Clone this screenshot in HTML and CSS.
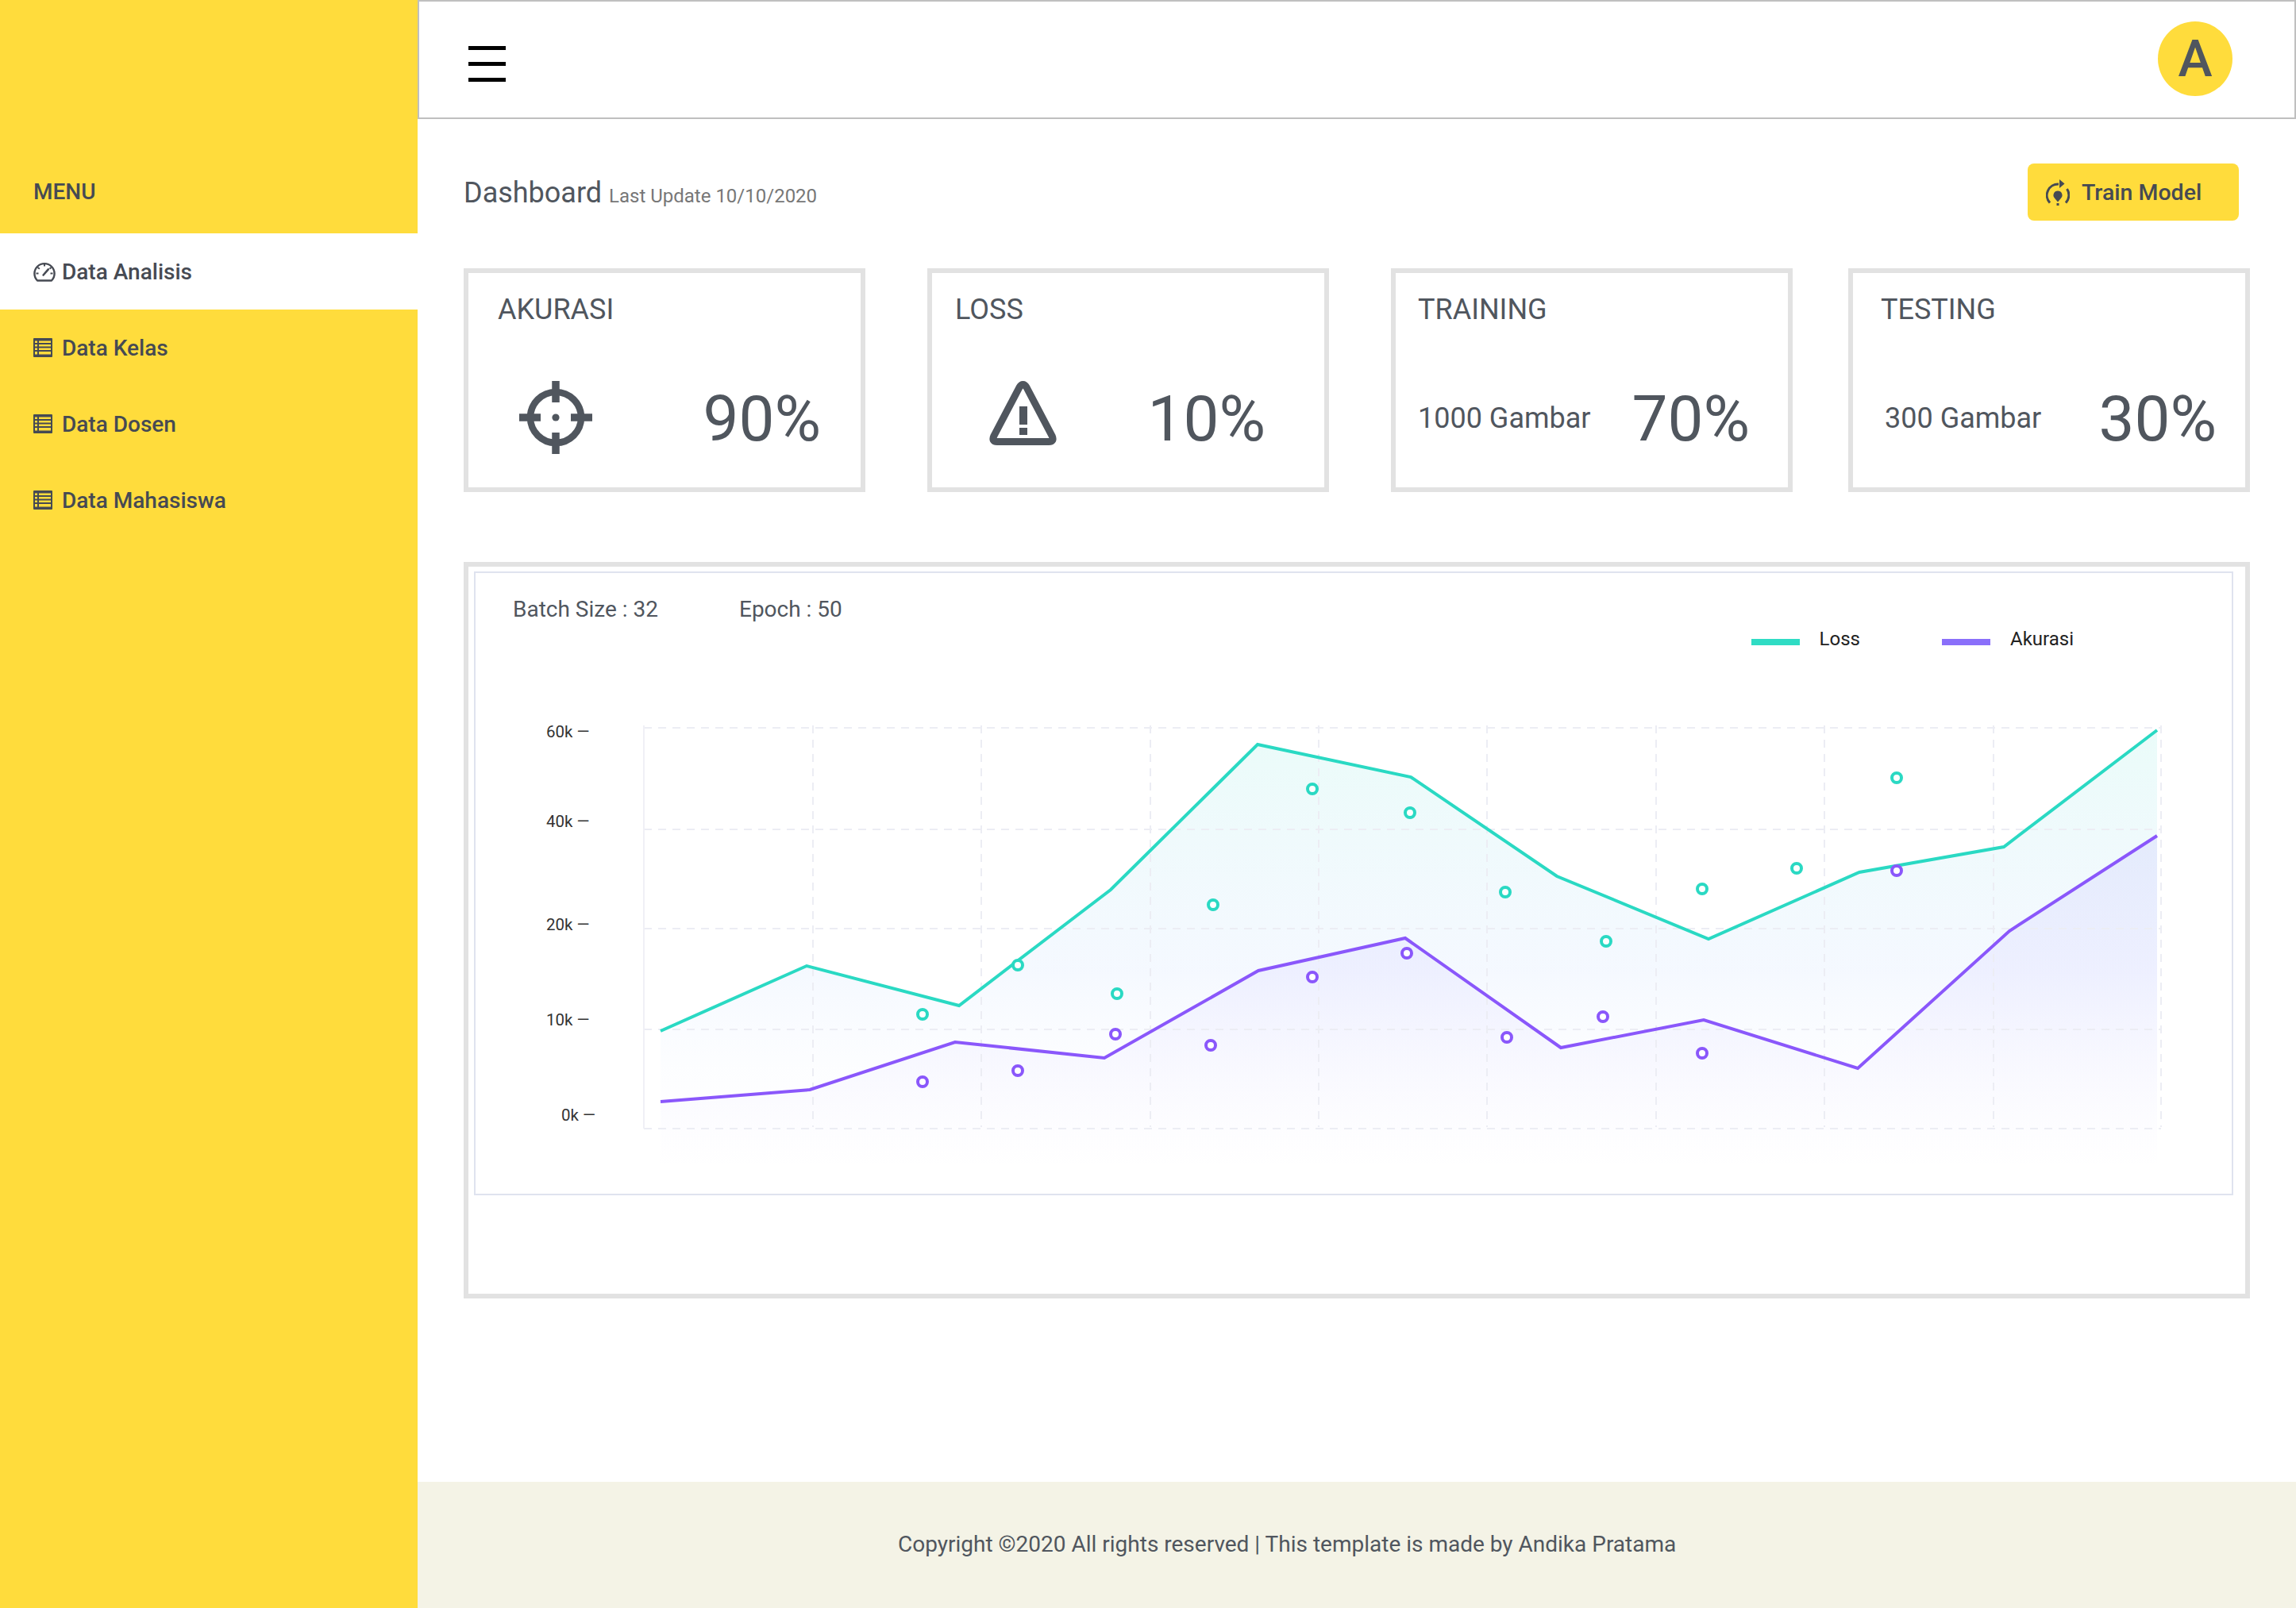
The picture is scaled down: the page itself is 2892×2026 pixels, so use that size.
FILE: index.html
```html
<!DOCTYPE html>
<html lang="id">
<head>
  <meta charset="UTF-8">
  <title>Dashboard</title>
  <link rel="stylesheet" href="styles.css">
</head>
<body>
  <aside class="sidebar">
    <div class="menu-title">MENU</div>
    <a class="menu-item active">
      <svg class="menu-icon" viewBox="0 0 28 26"><path d="M5 24.5 A12.6 12.6 0 1 1 23 24.5 Z" fill="none" stroke="#464a53" stroke-width="2.4" stroke-linejoin="round"/><path d="M14 3.5v3M5.5 8l2.4 1.8M22.5 8l-2 1.6M3.5 15.5h3M21.5 15.5h3" stroke="#464a53" stroke-width="2"/><path d="M12.6 17.5l6.2-7.2" stroke="#464a53" stroke-width="2.6" stroke-linecap="round"/></svg>
      Data Analisis
    </a>
    <a class="menu-item">
      <svg class="menu-icon list" viewBox="0 0 24 24"><use href="#i-list"/></svg>
      Data Kelas
    </a>
    <a class="menu-item">
      <svg class="menu-icon list" viewBox="0 0 24 24"><use href="#i-list"/></svg>
      Data Dosen
    </a>
    <a class="menu-item">
      <svg class="menu-icon list" viewBox="0 0 24 24"><use href="#i-list"/></svg>
      Data Mahasiswa
    </a>
  </aside>

  <svg class="defs">
    <defs>
      <g id="i-list">
        <rect x="0" y="0" width="24" height="24" rx="1" fill="#464a53"/>
        <path d="M2 3.5h3v2.6H2zM7 3.5h15v2.6H7zM2 8h3v2.6H2zM7 8h15v2.6H7zM2 12.5h3v2.6H2zM7 12.5h15v2.6H7zM2 17h3v3.5H2zM7 17h15v3.5H7z" fill="#ffdc3c"/>
      </g>
    </defs>
  </svg>

  <div class="main">
    <header class="topbar">
      <div class="burger"><span></span><span></span><span></span></div>
      <div class="avatar">A</div>
    </header>

    <main class="content">
      <div class="page-head">
        <div class="page-title">Dashboard <small>Last Update 10/10/2020</small></div>
        <button class="btn-train">
          <svg class="btn-icon" viewBox="0 0 30 33"><path d="M5 29.5 A14 14 0 0 1 16 6" fill="none" stroke="#464a53" stroke-width="3"/><path d="M23.5 5.5L17 0v11z" fill="#464a53"/><path d="M26.5 12 A14 14 0 0 1 25 29.5" fill="none" stroke="#464a53" stroke-width="3"/><path d="M15 14.5 a5.5 5.5 0 0 1 4 9.3 L15 28.5 L11 23.8 A5.5 5.5 0 0 1 15 14.5z" fill="#464a53"/><rect x="13.5" y="30" width="3" height="3" fill="#464a53"/></svg>
          Train Model
        </button>
      </div>

      <section class="cards">
        <div class="card card-akurasi">
          <div class="card-title">AKURASI</div>
          <div class="card-row">
            <svg class="card-icon" viewBox="0 0 92 92"><circle cx="46" cy="46" r="32" fill="none" stroke="#50565e" stroke-width="8.5"/><path d="M46 0v27M46 65v27M0 46h27M65 46h27" stroke="#50565e" stroke-width="9.5"/><circle cx="46" cy="46" r="4.6" fill="#50565e"/></svg>
            <div class="card-value">90%</div>
          </div>
        </div>
        <div class="card card-loss">
          <div class="card-title">LOSS</div>
          <div class="card-row">
            <svg class="card-icon warn" viewBox="0 0 85 82"><path d="M42.5 4.5 Q45 4.5 47 8 L79 69 Q82.5 76.5 75 76.5 H10 Q2.5 76.5 6 69 L38 8 Q40 4.5 42.5 4.5 Z" fill="none" stroke="#50565e" stroke-width="9" stroke-linejoin="round"/><path d="M38 32h10v23H38zM38 59h10v9H38z" fill="#50565e"/></svg>
            <div class="card-value">10%</div>
          </div>
        </div>
        <div class="card card-training">
          <div class="card-title">TRAINING</div>
          <div class="card-row">
            <div class="card-note">1000 Gambar</div>
            <div class="card-value">70%</div>
          </div>
        </div>
        <div class="card card-testing">
          <div class="card-title">TESTING</div>
          <div class="card-row">
            <div class="card-note">300 Gambar</div>
            <div class="card-value">30%</div>
          </div>
        </div>
      </section>

      <section class="chart-panel">
        <div class="chart-box">
          <div class="chart-head">
            <div class="chart-params">
              <span>Batch Size : 32</span>
              <span>Epoch : 50</span>
            </div>
            <div class="legend">
              <div class="legend-item"><i class="swatch teal"></i>Loss</div>
              <div class="legend-item"><i class="swatch purple"></i>Akurasi</div>
            </div>
          </div>
          <svg class="chart" viewBox="599 880 2212 624" width="2212" height="624">
            <defs>
              <linearGradient id="fillTeal" gradientUnits="userSpaceOnUse" x1="0" y1="920" x2="0" y2="1475">
                <stop offset="0" stop-color="#2fdcc4" stop-opacity=".1"/>
                <stop offset=".55" stop-color="#7fb0ff" stop-opacity=".08"/>
                <stop offset="1" stop-color="#ffffff" stop-opacity="0"/>
              </linearGradient>
              <linearGradient id="fillPurple" gradientUnits="userSpaceOnUse" x1="0" y1="1053" x2="0" y2="1475">
                <stop offset="0" stop-color="#7b61ff" stop-opacity=".1"/>
                <stop offset="1" stop-color="#7b61ff" stop-opacity="0"/>
              </linearGradient>
            </defs>

            <g class="axis-label">
              <text x="688" y="929">60k —</text>
              <text x="688" y="1042">40k —</text>
              <text x="688" y="1172">20k —</text>
              <text x="688" y="1292">10k —</text>
              <text x="707" y="1412">0k —</text>
            </g>

            <path class="area" fill="url(#fillTeal)" d="M832 1299L1016 1217 1208 1267 1399 1121 1584 938 1777 979 1961 1104 2152 1183 2342 1099 2524 1067 2717 920V1475H832Z"/>
            <path class="area" fill="url(#fillPurple)" d="M832 1388L1020 1373 1203 1313 1391 1333 1585 1223 1770 1182 1966 1320 2146 1285 2340 1346 2531 1173 2717 1053V1475H832Z"/>

            <g class="grid">
              <path d="M811 917H2722M811 1045H2722M811 1170H2722M811 1297H2722M811 1422H2722"/>
              <path d="M1024 914V1420M1236 914V1420M1449 914V1420M1661 914V1420M1873 914V1420M2086 914V1420M2298 914V1420M2511 914V1420M2722 914V1420"/>
            </g>
            <path class="grid-axis" d="M811 914V1422"/>

            <polyline class="line teal-line" points="832,1299 1016,1217 1208,1267 1399,1121 1584,938 1777,979 1961,1104 2152,1183 2342,1099 2524,1067 2717,920"/>
            <polyline class="line purple-line" points="832,1388 1020,1373 1203,1313 1391,1333 1585,1223 1770,1182 1966,1320 2146,1285 2340,1346 2531,1173 2717,1053"/>

            <g class="dots teal-dots">
              <circle cx="1162" cy="1278" r="6"/><circle cx="1282" cy="1216" r="6"/><circle cx="1407" cy="1252" r="6"/>
              <circle cx="1528" cy="1140" r="6"/><circle cx="1653" cy="994" r="6"/><circle cx="1776" cy="1024" r="6"/>
              <circle cx="1896" cy="1124" r="6"/><circle cx="2023" cy="1186" r="6"/><circle cx="2144" cy="1120" r="6"/>
              <circle cx="2263" cy="1094" r="6"/><circle cx="2389" cy="980" r="6"/>
            </g>
            <g class="dots purple-dots">
              <circle cx="1162" cy="1363" r="6"/><circle cx="1282" cy="1349" r="6"/><circle cx="1405" cy="1303" r="6"/>
              <circle cx="1525" cy="1317" r="6"/><circle cx="1653" cy="1231" r="6"/><circle cx="1772" cy="1201" r="6"/>
              <circle cx="1898" cy="1307" r="6"/><circle cx="2019" cy="1281" r="6"/><circle cx="2144" cy="1327" r="6"/>
              <circle cx="2389" cy="1097" r="6"/>
            </g>
          </svg>
        </div>
      </section>
    </main>

    <footer class="footer">Copyright ©2020 All rights reserved | This template is made by Andika Pratama</footer>
  </div>
</body>
</html>
```

FILE: styles.css
```css
* {
  box-sizing: border-box;
}
body {
  margin: 0;
  display: flex;
  min-height: 2026px;
  font-family: Roboto, "Liberation Sans", sans-serif;
  color: #50565e;
  background: #fff;
}
.defs {
  position: absolute;
  width: 0;
  height: 0;
}

/* sidebar */
.sidebar {
  width: 526px;
  flex: none;
  background: #ffdc3c;
  padding-top: 222px;
  color: #464a53;
}
.menu-title {
  font-size: 28px;
  font-weight: 500;
  line-height: 40px;
  padding-left: 42px;
  margin-bottom: 32px;
}
.menu-item {
  display: flex;
  align-items: center;
  height: 96px;
  padding-left: 42px;
  font-size: 28px;
  font-weight: 500;
}
.menu-item.active {
  background: #fff;
}
.menu-icon {
  width: 28px;
  height: 26px;
  margin-right: 8px;
  flex: none;
}
.menu-icon.list {
  width: 24px;
  height: 24px;
  margin-right: 12px;
}

/* top bar */
.main {
  flex: 1;
  display: flex;
  flex-direction: column;
}
.topbar {
  height: 150px;
  border: 2px solid #bfbfbf;
  display: flex;
  align-items: center;
  justify-content: space-between;
  padding: 0 78px 0 62px;
}
.burger {
  width: 47px;
  display: flex;
  flex-direction: column;
  gap: 15px;
  margin-top: 11px;
}
.burger span {
  height: 5px;
  background: #000;
}
.avatar {
  width: 94px;
  height: 94px;
  border-radius: 50%;
  background: #ffdc3c;
  font-size: 65px;
  font-weight: 500;
  line-height: 94px;
  text-align: center;
  margin-bottom: 2px;
}

/* content */
.content {
  flex: 1;
  padding: 56px 58px 0;
}
.page-head {
  display: flex;
  align-items: center;
  justify-content: space-between;
  padding-right: 14px;
}
.page-title {
  font-size: 36px;
  margin-top: 2px;
}
.page-title small {
  font-size: 24px;
  color: #777;
}
.btn-train {
  display: flex;
  align-items: center;
  width: 266px;
  height: 72px;
  padding: 0 0 0 23px;
  border: 0;
  border-radius: 8px;
  background: #ffdc3c;
  color: #464a53;
  font-family: inherit;
  font-size: 28.5px;
  font-weight: 500;
}
.btn-icon {
  width: 30px;
  height: 33px;
  margin-right: 15px;
}

/* stat cards */
.cards {
  display: flex;
  margin-top: 60px;
}
.card {
  width: 506px;
  height: 282px;
  border: 6px solid #e2e2e2;
  margin-right: 78px;
  padding: 25px 0 0 37px;
}
.card-testing {
  margin: 0 0 0 -8px;
}
.card-title {
  font-size: 36px;
  line-height: 43px;
}
.card-row {
  display: flex;
  align-items: center;
  justify-content: space-between;
  height: 92px;
  margin-top: 68px;
}
.card-icon {
  width: 92px;
  height: 92px;
  margin-left: 27px;
}
.card-icon.warn {
  width: 85px;
  height: 82px;
  margin-left: 43px;
  margin-top: -10px;
}
.card-value {
  font-size: 80px;
  line-height: 92px;
  padding-top: 4px;
}
.card-akurasi .card-row {
  padding-right: 50px;
}
.card-loss {
  padding-left: 29px;
}
.card-loss .card-row {
  padding-right: 74px;
}
.card-training {
  padding-left: 28px;
}
.card-training .card-row {
  padding-right: 48px;
}
.card-testing {
  padding-left: 35px;
}
.card-testing .card-row {
  padding: 0 36px 0 5px;
}
.card-note {
  font-size: 36px;
  padding-top: 2px;
}

/* chart */
.chart-panel {
  height: 928px;
  margin-top: 88px;
  border: 6px solid #e2e2e2;
  padding: 6px 15px 0 7px;
}
.chart-box {
  height: 786px;
  border: 2px solid #dfe3ef;
}
.chart-head {
  display: flex;
  justify-content: space-between;
  height: 158px;
  padding: 28px 199px 0 47px;
}
.chart-params {
  display: flex;
  gap: 102px;
  font-size: 28px;
  line-height: 36px;
}
.legend {
  display: flex;
  gap: 103px;
  margin-top: 40px;
  font-size: 24px;
  line-height: 30px;
  color: #222;
}
.legend-item {
  display: flex;
  align-items: center;
  height: 30px;
}
.swatch {
  width: 61px;
  height: 8px;
  margin: 8px 25px 0 0;
}
.swatch.teal {
  background: #2fdcc4;
}
.swatch.purple {
  background: #8a6ffa;
}
.chart {
  display: block;
}
.axis-label text {
  font-size: 20.5px;
  fill: #333;
}
.grid path {
  fill: none;
  stroke: #ecedf4;
  stroke-width: 2;
  stroke-dasharray: 10 8;
}
.grid-axis {
  fill: none;
  stroke: #f0f0f6;
  stroke-width: 2;
}
.line {
  fill: none;
  stroke-width: 4;
}
.teal-line {
  stroke: #2ad9c3;
}
.purple-line {
  stroke: #8a57fb;
}
.dots circle {
  fill: #fff;
  stroke-width: 4;
}
.teal-dots circle {
  stroke: #2ad9c3;
}
.purple-dots circle {
  stroke: #8a57fb;
}

/* footer */
.footer {
  height: 159px;
  background: #f4f3e6;
  font-size: 28px;
  line-height: 157px;
  padding-left: 605px;
}
```
